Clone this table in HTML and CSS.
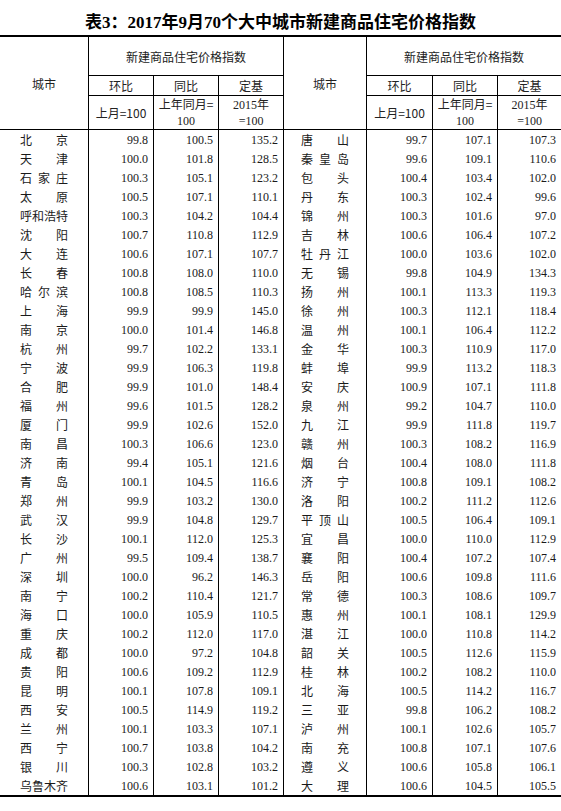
FILE: index.html
```html
<!DOCTYPE html>
<html lang="zh">
<head>
<meta charset="utf-8">
<title>表3</title>
<link rel="stylesheet" href="styles.css">
</head>
<body>
<div class="title">表3：2017年9月70个大中城市新建商品住宅价格指数</div>
<table class="tbl">
<colgroup>
<col class="w88"><col class="w65"><col class="w65"><col class="w65">
<col class="w83"><col class="w66"><col class="w65"><col class="w64">
</colgroup>
<thead>
<tr class="h1"><th rowspan="3" class="hb">城市</th><th colspan="3" class="hb">新建商品住宅价格指数</th><th rowspan="3" class="hb">城市</th><th colspan="3" class="hb">新建商品住宅价格指数</th></tr>
<tr class="h2"><th class="hb">环比</th><th class="hb">同比</th><th class="hb">定基</th><th class="hb">环比</th><th class="hb">同比</th><th class="hb">定基</th></tr>
<tr class="h3"><th class="hb sans">上月=100</th><th class="hb"><span class="sans">上年同月=</span><br>100</th><th class="hb serif">2015年<br>=100</th><th class="hb sans">上月=100</th><th class="hb"><span class="sans">上年同月=</span><br>100</th><th class="hb serif">2015年<br>=100</th></tr>
</thead>
<tbody>
<tr><td class="city"><span class="nm"><i>北</i><i>京</i></span></td><td>99.8</td><td>100.5</td><td>135.2</td><td class="city"><span class="nm"><i>唐</i><i>山</i></span></td><td>99.7</td><td>107.1</td><td>107.3</td></tr>
<tr><td class="city"><span class="nm"><i>天</i><i>津</i></span></td><td>100.0</td><td>101.8</td><td>128.5</td><td class="city"><span class="nm"><i>秦</i><i>皇</i><i>岛</i></span></td><td>99.6</td><td>109.1</td><td>110.6</td></tr>
<tr><td class="city"><span class="nm"><i>石</i><i>家</i><i>庄</i></span></td><td>100.3</td><td>105.1</td><td>123.2</td><td class="city"><span class="nm"><i>包</i><i>头</i></span></td><td>100.4</td><td>103.4</td><td>102.0</td></tr>
<tr><td class="city"><span class="nm"><i>太</i><i>原</i></span></td><td>100.5</td><td>107.1</td><td>110.1</td><td class="city"><span class="nm"><i>丹</i><i>东</i></span></td><td>100.3</td><td>102.4</td><td>99.6</td></tr>
<tr><td class="city"><span class="nm"><i>呼</i><i>和</i><i>浩</i><i>特</i></span></td><td>100.3</td><td>104.2</td><td>104.4</td><td class="city"><span class="nm"><i>锦</i><i>州</i></span></td><td>100.3</td><td>101.6</td><td>97.0</td></tr>
<tr><td class="city"><span class="nm"><i>沈</i><i>阳</i></span></td><td>100.7</td><td>110.8</td><td>112.9</td><td class="city"><span class="nm"><i>吉</i><i>林</i></span></td><td>100.6</td><td>106.4</td><td>107.2</td></tr>
<tr><td class="city"><span class="nm"><i>大</i><i>连</i></span></td><td>100.6</td><td>107.1</td><td>107.7</td><td class="city"><span class="nm"><i>牡</i><i>丹</i><i>江</i></span></td><td>100.0</td><td>103.6</td><td>102.0</td></tr>
<tr><td class="city"><span class="nm"><i>长</i><i>春</i></span></td><td>100.8</td><td>108.0</td><td>110.0</td><td class="city"><span class="nm"><i>无</i><i>锡</i></span></td><td>99.8</td><td>104.9</td><td>134.3</td></tr>
<tr><td class="city"><span class="nm"><i>哈</i><i>尔</i><i>滨</i></span></td><td>100.8</td><td>108.5</td><td>110.3</td><td class="city"><span class="nm"><i>扬</i><i>州</i></span></td><td>100.1</td><td>113.3</td><td>119.3</td></tr>
<tr><td class="city"><span class="nm"><i>上</i><i>海</i></span></td><td>99.9</td><td>99.9</td><td>145.0</td><td class="city"><span class="nm"><i>徐</i><i>州</i></span></td><td>100.3</td><td>112.1</td><td>118.4</td></tr>
<tr><td class="city"><span class="nm"><i>南</i><i>京</i></span></td><td>100.0</td><td>101.4</td><td>146.8</td><td class="city"><span class="nm"><i>温</i><i>州</i></span></td><td>100.1</td><td>106.4</td><td>112.2</td></tr>
<tr><td class="city"><span class="nm"><i>杭</i><i>州</i></span></td><td>99.7</td><td>102.2</td><td>133.1</td><td class="city"><span class="nm"><i>金</i><i>华</i></span></td><td>100.3</td><td>110.9</td><td>117.0</td></tr>
<tr><td class="city"><span class="nm"><i>宁</i><i>波</i></span></td><td>99.9</td><td>106.3</td><td>119.8</td><td class="city"><span class="nm"><i>蚌</i><i>埠</i></span></td><td>99.9</td><td>113.2</td><td>118.3</td></tr>
<tr><td class="city"><span class="nm"><i>合</i><i>肥</i></span></td><td>99.9</td><td>101.0</td><td>148.4</td><td class="city"><span class="nm"><i>安</i><i>庆</i></span></td><td>100.9</td><td>107.1</td><td>111.8</td></tr>
<tr><td class="city"><span class="nm"><i>福</i><i>州</i></span></td><td>99.6</td><td>101.5</td><td>128.2</td><td class="city"><span class="nm"><i>泉</i><i>州</i></span></td><td>99.2</td><td>104.7</td><td>110.0</td></tr>
<tr><td class="city"><span class="nm"><i>厦</i><i>门</i></span></td><td>99.9</td><td>102.6</td><td>152.0</td><td class="city"><span class="nm"><i>九</i><i>江</i></span></td><td>99.9</td><td>111.8</td><td>119.7</td></tr>
<tr><td class="city"><span class="nm"><i>南</i><i>昌</i></span></td><td>100.3</td><td>106.6</td><td>123.0</td><td class="city"><span class="nm"><i>赣</i><i>州</i></span></td><td>100.3</td><td>108.2</td><td>116.9</td></tr>
<tr><td class="city"><span class="nm"><i>济</i><i>南</i></span></td><td>99.4</td><td>105.1</td><td>121.6</td><td class="city"><span class="nm"><i>烟</i><i>台</i></span></td><td>100.4</td><td>108.0</td><td>111.8</td></tr>
<tr><td class="city"><span class="nm"><i>青</i><i>岛</i></span></td><td>100.1</td><td>104.5</td><td>116.6</td><td class="city"><span class="nm"><i>济</i><i>宁</i></span></td><td>100.8</td><td>109.1</td><td>108.2</td></tr>
<tr><td class="city"><span class="nm"><i>郑</i><i>州</i></span></td><td>99.9</td><td>103.2</td><td>130.0</td><td class="city"><span class="nm"><i>洛</i><i>阳</i></span></td><td>100.2</td><td>111.2</td><td>112.6</td></tr>
<tr><td class="city"><span class="nm"><i>武</i><i>汉</i></span></td><td>99.9</td><td>104.8</td><td>129.7</td><td class="city"><span class="nm"><i>平</i><i>顶</i><i>山</i></span></td><td>100.5</td><td>106.4</td><td>109.1</td></tr>
<tr><td class="city"><span class="nm"><i>长</i><i>沙</i></span></td><td>100.1</td><td>112.0</td><td>125.3</td><td class="city"><span class="nm"><i>宜</i><i>昌</i></span></td><td>100.0</td><td>110.0</td><td>112.9</td></tr>
<tr><td class="city"><span class="nm"><i>广</i><i>州</i></span></td><td>99.5</td><td>109.4</td><td>138.7</td><td class="city"><span class="nm"><i>襄</i><i>阳</i></span></td><td>100.4</td><td>107.2</td><td>107.4</td></tr>
<tr><td class="city"><span class="nm"><i>深</i><i>圳</i></span></td><td>100.0</td><td>96.2</td><td>146.3</td><td class="city"><span class="nm"><i>岳</i><i>阳</i></span></td><td>100.6</td><td>109.8</td><td>111.6</td></tr>
<tr><td class="city"><span class="nm"><i>南</i><i>宁</i></span></td><td>100.2</td><td>110.4</td><td>121.7</td><td class="city"><span class="nm"><i>常</i><i>德</i></span></td><td>100.3</td><td>108.6</td><td>109.7</td></tr>
<tr><td class="city"><span class="nm"><i>海</i><i>口</i></span></td><td>100.0</td><td>105.9</td><td>110.5</td><td class="city"><span class="nm"><i>惠</i><i>州</i></span></td><td>100.1</td><td>108.1</td><td>129.9</td></tr>
<tr><td class="city"><span class="nm"><i>重</i><i>庆</i></span></td><td>100.2</td><td>112.0</td><td>117.0</td><td class="city"><span class="nm"><i>湛</i><i>江</i></span></td><td>100.0</td><td>110.8</td><td>114.2</td></tr>
<tr><td class="city"><span class="nm"><i>成</i><i>都</i></span></td><td>100.0</td><td>97.2</td><td>104.8</td><td class="city"><span class="nm"><i>韶</i><i>关</i></span></td><td>100.5</td><td>112.6</td><td>115.9</td></tr>
<tr><td class="city"><span class="nm"><i>贵</i><i>阳</i></span></td><td>100.6</td><td>109.2</td><td>112.9</td><td class="city"><span class="nm"><i>桂</i><i>林</i></span></td><td>100.2</td><td>108.2</td><td>110.0</td></tr>
<tr><td class="city"><span class="nm"><i>昆</i><i>明</i></span></td><td>100.1</td><td>107.8</td><td>109.1</td><td class="city"><span class="nm"><i>北</i><i>海</i></span></td><td>100.5</td><td>114.2</td><td>116.7</td></tr>
<tr><td class="city"><span class="nm"><i>西</i><i>安</i></span></td><td>100.5</td><td>114.9</td><td>119.2</td><td class="city"><span class="nm"><i>三</i><i>亚</i></span></td><td>99.8</td><td>106.2</td><td>108.2</td></tr>
<tr><td class="city"><span class="nm"><i>兰</i><i>州</i></span></td><td>100.1</td><td>103.3</td><td>107.1</td><td class="city"><span class="nm"><i>泸</i><i>州</i></span></td><td>100.1</td><td>102.6</td><td>105.7</td></tr>
<tr><td class="city"><span class="nm"><i>西</i><i>宁</i></span></td><td>100.7</td><td>103.8</td><td>104.2</td><td class="city"><span class="nm"><i>南</i><i>充</i></span></td><td>100.8</td><td>107.1</td><td>107.6</td></tr>
<tr><td class="city"><span class="nm"><i>银</i><i>川</i></span></td><td>100.3</td><td>102.8</td><td>103.2</td><td class="city"><span class="nm"><i>遵</i><i>义</i></span></td><td>100.6</td><td>105.8</td><td>106.1</td></tr>
<tr><td class="city"><span class="nm"><i>乌</i><i>鲁</i><i>木</i><i>齐</i></span></td><td>100.6</td><td>103.1</td><td>101.2</td><td class="city"><span class="nm"><i>大</i><i>理</i></span></td><td>100.6</td><td>104.5</td><td>105.5</td></tr>
</tbody>
</table>
</body>
</html>
```

FILE: styles.css
```css
html, body {
  margin: 0;
  padding: 0;
  background: #fff;
}
body {
  width: 561px;
  color: #111;
  font-family: "Liberation Serif", "Noto Sans CJK SC", serif;
}
.title {
  box-sizing: border-box;
  height: 35px;
  padding-top: 13px;
  line-height: 20px;
  font-size: 17px;
  font-weight: bold;
  text-align: center;
  color: #000;
  white-space: nowrap;
}
.tbl {
  width: 561px;
  table-layout: fixed;
  border-collapse: separate;
  border-spacing: 0;
  border-top: 2px solid #000;
  border-bottom: 2px solid #000;
}
.w88 { width: 88px; }
.w83 { width: 83px; }
.w66 { width: 66px; }
.w65 { width: 65px; }
.w64 { width: 64px; }
.tbl th, .tbl td {
  padding: 0;
  border-left: 1px solid #000;
  font-size: 12px;
}
.tbl tr > :first-child { border-left: none; }
.tbl thead tr:not(:first-child) > :first-child { border-left: 1px solid #000; }
.tbl th {
  font-weight: normal;
  text-align: center;
  vertical-align: middle;
  font-family: "Noto Sans CJK SC", sans-serif;
  color: #222;
}
.tbl th.hb { border-bottom: 1px solid #000; }
.tbl th.serif { font-family: "Liberation Serif", "Noto Sans CJK SC", serif; }
.tbl th .sans, .tbl th.sans { font-family: "Noto Sans CJK SC", sans-serif; }
.tbl th span { font-family: inherit; }
.h1 { height: 39px; }
.h2 { height: 20px; }
.h3 { height: 33px; }
.h3 th { line-height: 16px; }
.h3 th:nth-child(2), .h3 th:nth-child(5) { font-family: "Liberation Serif", serif; }
.tbl tbody tr { height: 19px; }
.tbl td {
  text-align: right;
  padding-right: 5px;
  padding-top: 2px;
  line-height: 17px;
  vertical-align: top;
  color: #1a1a1a;
}
.tbl td.city {
  text-align: center;
  padding-right: 0;
  padding-top: 1px;
  line-height: 18px;
}
.nm {
  display: flex;
  justify-content: space-between;
  width: 48px;
  margin: 0 auto;
  font-family: "Noto Sans CJK SC", sans-serif;
  font-size: 12px;
}
.nm i {
  font-style: normal;
}
```
